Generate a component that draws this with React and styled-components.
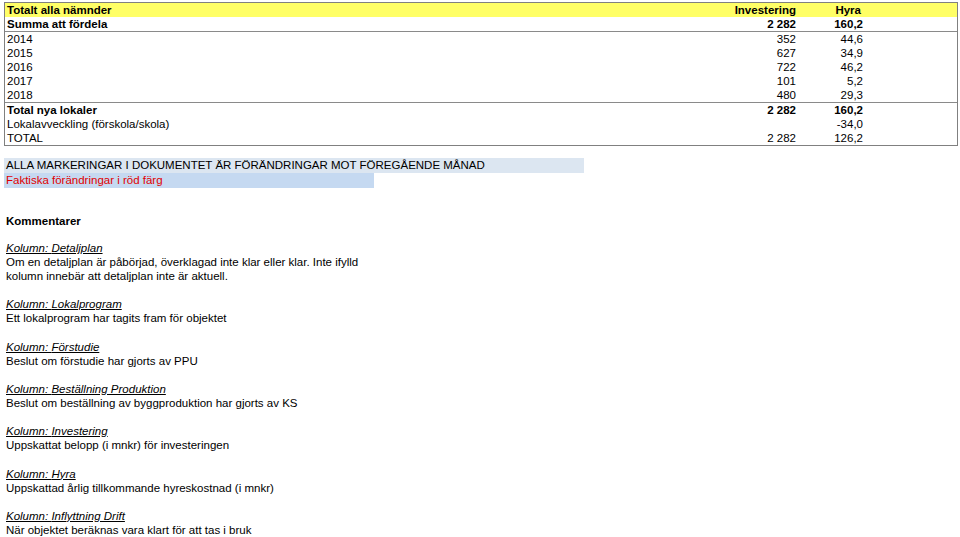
import React from "react";
import styled, { createGlobalStyle } from "styled-components";

const G = createGlobalStyle`
  body { margin: 0; background: #fff; font-family: "Liberation Sans", Arial, sans-serif; font-size: 11.5px; color: #000; }
`;
const Page = styled.div`padding: 2px 4px 0 4px;`;
const Table = styled.div`width: 952px; border: 1px solid #808080; border-top: none;`;
const Row = styled.div`
  display: grid; grid-template-columns: 1fr 80px 67px 94px; height: 14px; line-height: 14px;
  background: ${p => p.$bg || "transparent"};
  font-weight: ${p => (p.$bold ? "bold" : "normal")};
  border-bottom: ${p => (p.$line ? "1.5px solid #8a8a8a" : "none")};
  padding-left: 2px;
`;
const Num = styled.span`text-align: right;`;
const Banner = styled.div`
  width: ${p => p.$w}px; height: 15px; line-height: 15px; background: ${p => p.$bg};
  color: ${p => p.$color || "#000"}; padding-left: 2px; box-sizing: border-box;
`;
const Banners = styled.div`margin-top: 12px;`;
const Heading = styled.div`font-weight: bold; margin-top: 26px; line-height: 14px; padding-left: 2px;`;
const Comments = styled.div`margin-top: 13px; padding-left: 2px; line-height: 14.1px;`;
const Block = styled.div`margin-bottom: 14.1px;`;
const Label = styled.div`font-style: italic; text-decoration: underline;`;

const rows = [
  ["2014", "352", "44,6"], ["2015", "627", "34,9"], ["2016", "722", "46,2"],
  ["2017", "101", "5,2"], ["2018", "480", "29,3"],
];
const comments = [
  ["Detaljplan", ["Om en detaljplan är påbörjad, överklagad inte klar eller klar. Inte ifylld", "kolumn innebär att detaljplan inte är aktuell."]],
  ["Lokalprogram", ["Ett lokalprogram har tagits fram för objektet"]],
  ["Förstudie", ["Beslut om förstudie har gjorts av PPU"]],
  ["Beställning Produktion", ["Beslut om beställning av byggproduktion har gjorts av KS"]],
  ["Investering", ["Uppskattat belopp (i mnkr) för investeringen"]],
  ["Hyra", ["Uppskattad årlig tillkommande hyreskostnad (i mnkr)"]],
  ["Inflyttning Drift", ["När objektet beräknas vara klart för att tas i bruk"]],
];

export default function App() {
  return (
    <Page>
      <G />
      <Table>
        <Row $bg="#ffff66" $bold style={{ borderTop: "1px solid #808080" }}>
          <span>Totalt alla nämnder</span><Num style={{ paddingRight: 0 }}>Investering</Num><Num style={{ paddingRight: 2 }}>Hyra</Num><span />
        </Row>
        <Row $bold $line><span>Summa att fördela</span><Num>2 282</Num><Num>160,2</Num><span /></Row>
        {rows.map((r, i) => (
          <Row key={r[0]} $line={i === rows.length - 1}><span>{r[0]}</span><Num>{r[1]}</Num><Num>{r[2]}</Num><span /></Row>
        ))}
        <Row $bold><span>Total nya lokaler</span><Num>2 282</Num><Num>160,2</Num><span /></Row>
        <Row><span>Lokalavveckling (förskola/skola)</span><Num></Num><Num>-34,0</Num><span /></Row>
        <Row><span>TOTAL</span><Num>2 282</Num><Num>126,2</Num><span /></Row>
      </Table>
      <Banners>
        <Banner $w={580} $bg="#dce6f1">ALLA MARKERINGAR I DOKUMENTET ÄR FÖRÄNDRINGAR MOT FÖREGÅENDE MÅNAD</Banner>
        <Banner $w={370} $bg="#c5d9f1" $color="#e00000">Faktiska förändringar i röd färg</Banner>
      </Banners>
      <Heading>Kommentarer</Heading>
      <Comments>
        {comments.map(([l, t]) => (
          <Block key={l}>
            <Label>Kolumn: {l}</Label>
            {t.map(x => <div key={x}>{x}</div>)}
          </Block>
        ))}
      </Comments>
    </Page>
  );
}
